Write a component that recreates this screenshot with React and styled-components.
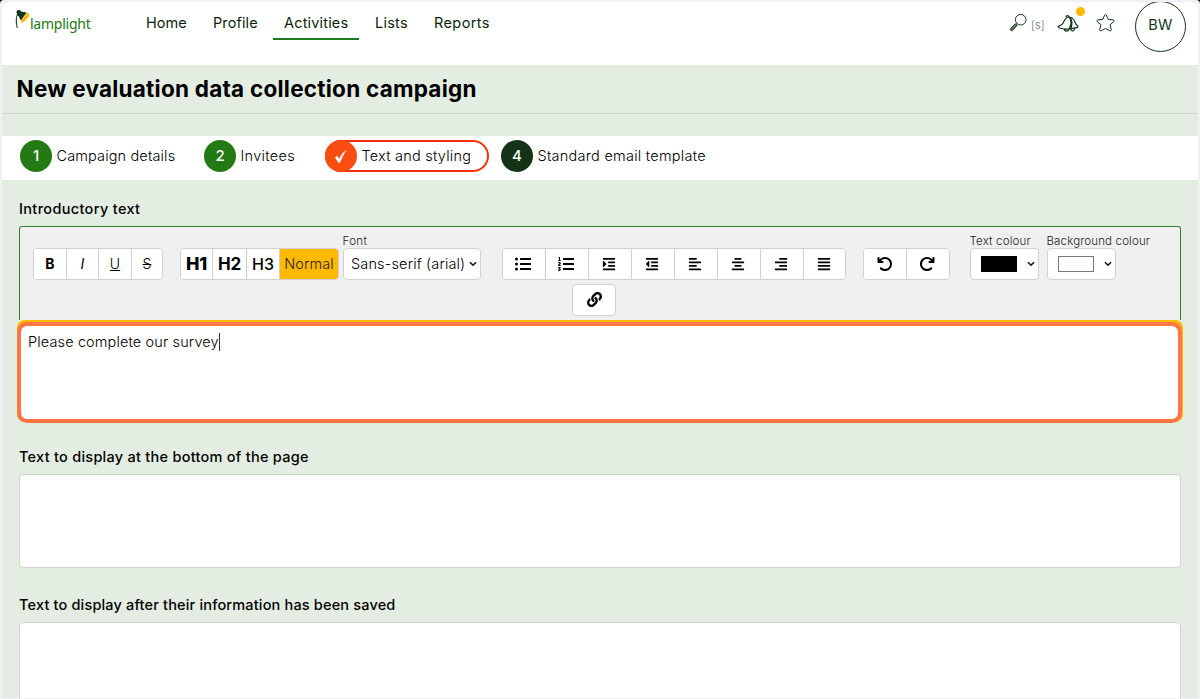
import React from "react";
import styled, { createGlobalStyle, css } from "styled-components";
import { FaListUl, FaListOl, FaIndent, FaOutdent, FaAlignLeft, FaAlignCenter, FaAlignRight, FaAlignJustify, FaLink } from "react-icons/fa";
import { FaArrowRotateLeft, FaArrowRotateRight } from "react-icons/fa6";

const Global = createGlobalStyle`
  * { box-sizing: border-box; }
  body { margin: 0; background: #000; font-family: Inter, "Liberation Sans", sans-serif; color: #000; overflow: hidden; }
`;

const Frame = styled.div`
  height: 699px;
  padding: 2px 2px 1px;
  background: #f1f0f6;
  border-radius: 4px 4px 0 0;
`;
const Page = styled.div`
  height: 696px;
  overflow: hidden;
  background: #e4ede2;
  border-radius: 7px 7px 0 0;
`;
const Label = styled.span`
  display: inline-block;
  white-space: nowrap;
  letter-spacing: ${(p) => p.$ls || 0}px;
`;

const Header = styled.header`
  display: flex;
  height: 63px;
  background: #fff;
  padding-left: 12px;
`;
const Brand = styled.div`
  display: flex;
  width: 121px;
  padding-top: 5px;
  color: #217a12;
  font: 400 14px/33px "Noto Sans", sans-serif;
  svg { width: 17px; height: 25px; flex: none; margin-right: -1px; }
`;
const Nav = styled.nav`
  display: flex;
  height: 38px;
`;
const NavItem = styled.a`
  width: ${(p) => p.$w}px;
  margin-right: ${(p) => p.$gap}px;
  padding-left: 11px;
  font-size: 14.5px;
  line-height: 41px;
  color: #0b1f0c;
  ${(p) => p.$active && css`border-bottom: 2px solid #1b7a1b;`}
`;
const Tools = styled.div`
  display: flex;
  margin-left: auto;
  padding-right: 12px;
  color: #12351a;
`;
const ToolIcon = styled.div`
  position: relative;
  width: ${(p) => p.$w}px;
  padding-top: 10px;
  svg { display: block; }
`;
const Shortcut = styled.div`
  width: 26px;
  font-size: 11px;
  font-weight: 300;
  line-height: 46px;
  color: #66736a;
`;
const Dot = styled.i`
  position: absolute;
  left: 19px;
  top: 5px;
  width: 9px;
  height: 9px;
  border-radius: 50%;
  background: #ffb900;
`;
const Avatar = styled.div`
  width: 51px;
  height: 51px;
  margin-top: -1px;
  border: 1.5px solid #12351a;
  border-radius: 50%;
  font-size: 14.5px;
  line-height: 46px;
  text-align: center;
`;

const TitleBar = styled.div`
  height: 49px;
  padding-left: 14.5px;
  border-bottom: 1px solid #ccd6cb;
`;
const Title = styled.h1`
  margin: 0;
  font-size: 22.5px;
  font-weight: 700;
  line-height: 48px;
`;
const Steps = styled.div`
  display: flex;
  align-items: center;
  height: 44px;
  margin-top: 22px;
  padding: 0 0 4px 18px;
  background: #fff;
`;
const Step = styled.div`
  display: flex;
  align-items: center;
  gap: 4.5px;
  width: ${(p) => p.$w}px;
  height: 32px;
  margin-right: ${(p) => p.$gap || 0}px;
  border-radius: 16px;
  font-size: 14.5px;
  font-weight: 300;
  line-height: 16px;
  color: #000;
  ${(p) => p.$current && css`box-shadow: inset 0 0 0 2px #f92f0a;`}
`;
const Badge = styled.span`
  display: grid;
  place-items: center;
  flex: none;
  width: 32px;
  height: 32px;
  border-radius: 50%;
  background: ${(p) => p.$bg};
  color: #fff;
  font-size: 15px;
  font-weight: 500;
`;

const Content = styled.main`
  padding: 0 17px;
`;
const FieldTitle = styled.div`
  height: ${(p) => p.$h}px;
  padding-top: ${(p) => p.$top}px;
  font-size: 14.5px;
  font-weight: 500;
  line-height: 20px;
`;
const Toolbar = styled.div`
  height: 94px;
  padding: 8px 13px 0;
  border: 1px solid #348032;
  border-bottom: 0;
  border-radius: 3px 3px 0 0;
  background: #f0f0f0;
`;
const ToolRow = styled.div`
  display: flex;
  align-items: flex-end;
  height: 45px;
`;
const LinkRow = styled.div`
  display: flex;
  padding: 4px 0 0 539px;
`;
const Group = styled.div`
  display: flex;
  height: 32px;
  margin-right: ${(p) => p.$gap || 0}px;
  border: 1px solid #d0d0d0;
  border-radius: 4px;
  background: #fff;
  overflow: hidden;
`;
const Button = styled.button`
  display: grid;
  place-items: center;
  width: ${(p) => p.$w || 43}px;
  padding: 0 ${(p) => p.$shift || 0}px 1px 0;
  border: 0;
  border-right: 1px solid #d0d0d0;
  background: ${(p) => (p.$on ? "#ffb900" : "#fff")};
  color: ${(p) => (p.$on ? "#2a2000" : "#000")};
  font: ${(p) => p.$weight || 400} ${(p) => p.$size || 14}px Inter, sans-serif;
  &:last-child { border-right: 0; }
`;
const Picker = styled.div`
  width: ${(p) => p.$w}px;
  margin-right: ${(p) => p.$gap || 0}px;
`;
const PickerLabel = styled.div`
  height: 14px;
  margin-left: -0.5px;
  font-size: 11.5px;
  font-weight: 300;
  line-height: 14px;
  color: #222;
`;
const Select = styled.div`
  display: flex;
  align-items: center;
  justify-content: space-between;
  height: 32px;
  padding: 0 3px 1px ${(p) => p.$left}px;
  border: 1px solid #d0d0d0;
  border-radius: 4px;
  background: #fff;
  font-size: 14.5px;
  font-weight: 300;
  color: #000;
`;
const Swatch = styled.span`
  width: 36px;
  height: 16px;
  border: 1px solid #777;
  border-color: ${(p) => (p.$c === "#000" ? "#000" : "#777")};
  background: ${(p) => p.$c};
`;
const Editor = styled.div`
  position: relative;
  height: 102px;
  margin: 0 -2px;
  border-radius: 8px;
  background: #ffb900;
`;
const Focus = styled.div`
  position: absolute;
  inset: 2px 1px -1px 0;
  padding: 6px 7px;
  border: 4px solid #ff7543;
  border-radius: 10px;
  background: #fff;
  font-size: 14.5px;
  font-weight: 300;
  line-height: 20px;
  color: #000;
`;
const Caret = styled.i`
  display: inline-block;
  width: 1px;
  height: 18px;
  vertical-align: -4px;
  background: #333;
`;
const TextArea = styled.div`
  height: 94px;
  border: 1px solid #cfd3cf;
  border-radius: 4px;
  background: #fff;
`;

const Chevron = () => (
  <svg width="8" height="6" viewBox="0 0 8 6" fill="none" stroke="#111" strokeWidth="1.6">
    <path d="M1 1.2 4 4.2 7 1.2" />
  </svg>
);

const nav = [
  ["Home", 62, 5, false, 0],
  ["Profile", 66, 5, false, 0.1],
  ["Activities", 86, 5, true, 0.17],
  ["Lists", 54, 5, false, 0.25],
  ["Reports", 78, 0, false, 0.4],
];
const layoutIcons = [
  [FaListUl, 16], [FaListOl, 16], [FaIndent, 14], [FaOutdent, 14],
  [FaAlignLeft, 14], [FaAlignCenter, 14], [FaAlignRight, 14], [FaAlignJustify, 14],
];

export default function App() {
  return (
    <Frame>
      <Global />
      <Page>
        <Header>
          <Brand>
            <svg viewBox="0 0 17 25">
              <path d="M4.200 6C2.400 8.500 1.900 15 3.200 21" fill="none" stroke="#17401a" strokeWidth="1.100" />
              <path d="M2.400 5.200C2.600 2.600 6 2.200 7 4.400L12.600 5.400 7.200 13.200C5.200 12.400 6 9.500 3.500 8.600Z" fill="#12351a" />
              <path d="M13.200 5.400C17 6.200 15 10.200 11.400 13.400 9.700 15.100 7 16.800 6.800 14.200Z" fill="#ffb900" />
            </svg>
            <Label $ls={-0.25}>lamplight</Label>
          </Brand>
          <Nav>
            {nav.map(([t, w, gap, on, ls]) => (
              <NavItem key={t} $w={w} $gap={gap} $active={on}><Label $ls={ls}>{t}</Label></NavItem>
            ))}
          </Nav>
          <Tools>
            <ToolIcon $w={23}>
              <svg width="19" height="21" viewBox="0 0 19 20" fill="none" stroke="#12351a">
                <circle cx="12.7" cy="7.2" r="5.3" />
                <path d="m8.800 11.200-1.500 1.400" />
                <path d="m7.500 11.200 1.600 1.700-4.800 5.200c-1.200.6-2.300-.7-1.800-1.800Z" fill="#66796a" />
              </svg>
            </ToolIcon>
            <Shortcut><Label $ls={0.1}>[s]</Label></Shortcut>
            <ToolIcon $w={38}>
              <svg width="22" height="22" viewBox="0 0 22 22" fill="none" stroke="#12351a" strokeWidth="1.2">
                <path d="M8.800 5C9.200 3.200 11.800 3.200 12.200 5 7 5 7.200 11 4.800 12.600L1.200 14.500 2 15.800C6 17.300 10 17.600 13.800 16.600L20.600 15.400 20.800 14C17.200 12.200 18.500 5.600 12.200 5 14.200 8 14.600 12.500 12.200 16.900M12.200 5C15 7.500 15.600 12 13.800 16.600M7 17C7.800 19.800 11.500 20 12.300 17.200M13.800 17C14.600 19.900 17.400 19.200 17.800 16.200" />
              </svg>
              <Dot />
            </ToolIcon>
            <ToolIcon $w={40}>
              <svg width="21" height="21" viewBox="0 0 21 20" fill="none" stroke="#12351a" strokeWidth="1" strokeLinejoin="round">
                <path d="M9.700 2.600Q10.500 1.200 11.300 2.600L13.200 6.900 18.200 7.400Q19.800 8 18.700 9.200L15.100 12.200 16.300 17.200Q16.200 18.900 14.700 18.200L10.500 16 6.300 18.200Q4.800 18.900 4.700 17.200L5.900 12.200 2.300 9.200Q1.200 8 2.800 7.400L7.800 6.900Z" />
              </svg>
            </ToolIcon>
            <Avatar><Label $ls={0.3}>BW</Label></Avatar>
          </Tools>
        </Header>
        <TitleBar><Title><Label $ls={0.24}>New evaluation data collection campaign</Label></Title></TitleBar>
        <Steps>
          <Step $w={184}><Badge $bg="#237a14">1</Badge><Label $ls={0.14}>Campaign details</Label></Step>
          <Step $w={121}><Badge $bg="#237a14">2</Badge><Label $ls={0.32}>Invitees</Label></Step>
          <Step $w={164} $gap={12} $current>
            <Badge $bg="#fa4d12">
              <svg width="14" height="15" viewBox="0 0 14 15" fill="#fff"><path d="M1 8.400 3 6.800 5.300 9.800C7 6 8.800 3.300 12.700 1 10 4.600 8 8.500 6.200 13.400L4.500 13.700Z" /></svg>
            </Badge>
            <Label $ls={0.22}>Text and styling</Label>
          </Step>
          <Step $w={210}><Badge $bg="#143316">4</Badge><Label $ls={0.26}>Standard email template</Label></Step>
        </Steps>
        <Content>
          <FieldTitle $h={46} $top={19}><Label $ls={0.34}>Introductory text</Label></FieldTitle>
          <Toolbar>
            <ToolRow>
              <Group $gap={17}>
                <Button $w={33} $weight={700}>B</Button>
                <Button $w={32}><em>I</em></Button>
                <Button $w={33} $weight={300}><u>U</u></Button>
                <Button $w={30} $weight={300}><s>S</s></Button>
              </Group>
              <Group $gap={4}>
                <Button $w={32} $weight={800} $size={18}><Label $ls={-0.2}>H1</Label></Button>
                <Button $w={34} $weight={700} $size={17}><Label $ls={-0.2}>H2</Label></Button>
                <Button $w={33} $weight={500} $size={16}><Label>H3</Label></Button>
                <Button $w={58} $size={14.5} $weight={300} $on><Label $ls={0.12}>Normal</Label></Button>
              </Group>
              <Picker $w={138} $gap={21}>
                <PickerLabel><Label $ls={0.35}>Font</Label></PickerLabel>
                <Select $left={7}><Label $ls={0.15}>Sans-serif (arial)</Label><Chevron /></Select>
              </Picker>
              <Group $gap={17}>
                {layoutIcons.map(([Icon, size], i) => (
                  <Button key={i} $w={i === 7 ? 41 : 43} $shift={2}><Icon size={size} /></Button>
                ))}
              </Group>
              <Group $gap={20}>
                <Button $w={43} $shift={1}><FaArrowRotateLeft size={16} /></Button>
                <Button $w={42} $shift={2}><FaArrowRotateRight size={16} /></Button>
              </Group>
              <Picker $w={69} $gap={8}>
                <PickerLabel><Label $ls={0.17}>Text colour</Label></PickerLabel>
                <Select $left={10}><Swatch $c="#000" /><Chevron /></Select>
              </Picker>
              <Picker $w={69}>
                <PickerLabel><Label $ls={0.15}>Background colour</Label></PickerLabel>
                <Select $left={10}><Swatch $c="#fff" /><Chevron /></Select>
              </Picker>
            </ToolRow>
            <LinkRow>
              <Group><Button $w={42}><FaLink size={15} /></Button></Group>
            </LinkRow>
          </Toolbar>
          <Editor>
            <Focus><Label $ls={0.13}>Please complete our survey</Label><Caret /></Focus>
          </Editor>
          <FieldTitle $h={52} $top={25}><Label $ls={0.26}>Text to display at the bottom of the page</Label></FieldTitle>
          <TextArea />
          <FieldTitle $h={54} $top={27}><Label $ls={0.17}>Text to display after their information has been saved</Label></FieldTitle>
          <TextArea />
        </Content>
      </Page>
    </Frame>
  );
}
